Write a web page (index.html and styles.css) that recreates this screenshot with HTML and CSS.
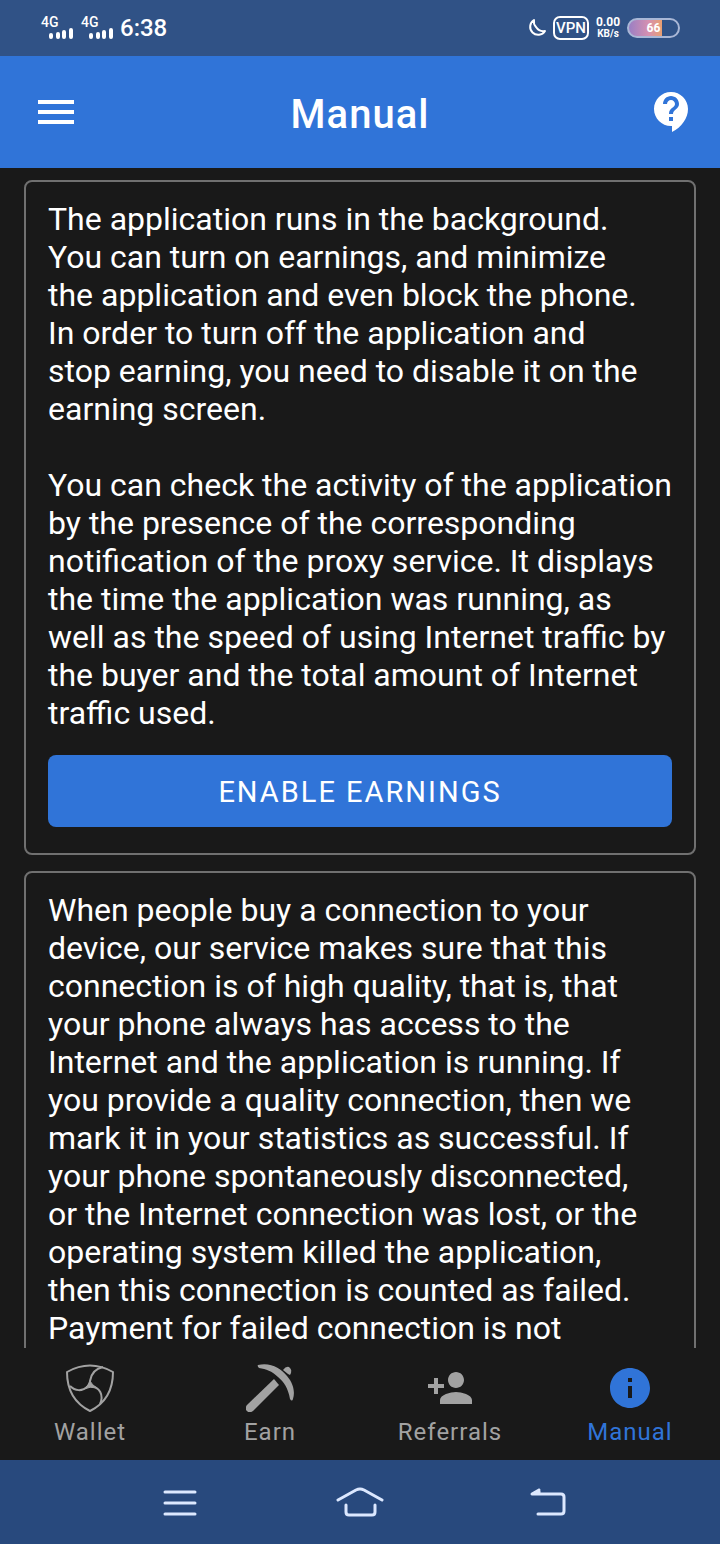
FILE: index.html
```html
<!DOCTYPE html>
<html lang="en">
	<head>
		<meta charset="utf-8">
		<meta name="viewport" content="width=device-width, initial-scale=1">
		<title>Manual</title>
		<link rel="stylesheet" href="styles.css">
	</head>
	<body>
		<div class="status-bar">
			<div class="status-left">
				<div class="signal">
					<span>4G</span>
					<svg width="26" height="12" viewBox="0 0 26 12"><path d="M3 8v2M10 7v3M16 5v5M23 3v7"/></svg>
				</div>
				<div class="signal">
					<span>4G</span>
					<svg width="26" height="12" viewBox="0 0 26 12"><path d="M3 8v2M10 7v3M16 5v5M23 3v7"/></svg>
				</div>
				<span class="clock">6:38</span>
			</div>
			<div class="status-right">
				<svg class="moon" width="20" height="20" viewBox="0 0 20 20"><path d="M7 2A8 8 0 1 0 18 13A9 9 0 0 1 9 9A8 8 0 0 1 7 2z"/></svg>
				<span class="vpn">VPN</span>
				<div class="speed"><b>0.00</b><small>KB/s</small></div>
				<div class="battery"><span>66</span></div>
			</div>
		</div>

		<header class="app-bar">
			<button class="menu" aria-label="Menu">
				<svg width="48" height="48" viewBox="0 0 24 24" fill="#fff"><path d="M3 18h18v-2H3v2zm0-5h18v-2H3v2zm0-7v2h18V6H3z"/></svg>
			</button>
			<h1>Manual</h1>
			<button class="help" aria-label="Help">
				<svg width="48" height="48" viewBox="0 0 24 24" fill="#fff"><path d="M11.500 2C6.810 2 3 5.810 3 10.500S6.810 19 11.500 19h.5v3c4.860-2.340 8-7 8-11.500C20 5.810 16.190 2 11.500 2zm1 14.500h-2v-2h2v2zm0-3.500h-2c0-3.250 3-3 3-5 0-1.100-.9-2-2-2s-2 .9-2 2h-2c0-2.210 1.790-4 4-4s4 1.790 4 4c0 2.500-3 2.750-3 5z"/></svg>
			</button>
		</header>

		<main>
			<section class="card">
				<p>
					The application runs in the background.<br>
					You can turn on earnings, and minimize<br>
					the application and even block the phone.<br>
					In order to turn off the application and<br>
					stop earning, you need to disable it on the<br>
					earning screen.
				</p>
				<p>
					You can check the activity of the application<br>
					by the presence of the corresponding<br>
					notification of the proxy service. It displays<br>
					the time the application was running, as<br>
					well as the speed of using Internet traffic by<br>
					the buyer and the total amount of Internet<br>
					traffic used.
				</p>
				<button class="enable">ENABLE EARNINGS</button>
			</section>
			<section class="card">
				<p>
					When people buy a connection to your<br>
					device, our service makes sure that this<br>
					connection is of high quality, that is, that<br>
					your phone always has access to the<br>
					Internet and the application is running. If<br>
					you provide a quality connection, then we<br>
					mark it in your statistics as successful. If<br>
					your phone spontaneously disconnected,<br>
					or the Internet connection was lost, or the<br>
					operating system killed the application,<br>
					then this connection is counted as failed.<br>
					Payment for failed connection is not
				</p>
			</section>
		</main>

		<nav class="tabs">
			<a href="#wallet">
				<svg width="48" height="48" viewBox="0 0 48 48" fill="none" stroke="#a2a2a2" stroke-width="2" stroke-linejoin="round">
					<path d="M1 8Q24-5 47 8C47 27 38 40 24 47C10 40 1 27 1 8z"/>
					<path d="M37 3C28 5 25 10 24 17Q24 20 22 22C16 28 9 27 4 22M24 22C34 23 38 31 34 40"/>
					<path d="M24 17Q23 21 18 25Q24 22 31 24Q26 21 24 17z" fill="#a2a2a2" stroke-width="1"/>
				</svg>
				<span>Wallet</span>
			</a>
			<a href="#earn">
				<svg width="48" height="48" viewBox="0 0 48 48" fill="#a2a2a2">
					<path d="M12 1C24-2 35 4 41 12C48 20 49 29 47 35Q46 38 44 35C42 24 38 18 32 13C26 7 20 5 13 4Q11 2 12 1z"/>
					<path d="M37 6Q40 2 43 3Q47 6 44 11L42 10z"/>
					<path d="M28 15L33 21L7 47Q3 50 0 46Q-1 43 1 41z"/>
				</svg>
				<span>Earn</span>
			</a>
			<a href="#referrals">
				<svg width="48" height="48" viewBox="0 0 24 24" fill="#a2a2a2"><path d="M15 12c2.210 0 4-1.790 4-4s-1.790-4-4-4-4 1.790-4 4 1.790 4 4 4zm-9-2V7H4v3H1v2h3v3h2v-3h3v-2H6zm9 4c-2.670 0-8 1.340-8 4v2h16v-2c0-2.660-5.330-4-8-4z"/></svg>
				<span>Referrals</span>
			</a>
			<a href="#manual" class="active">
				<svg width="48" height="48" viewBox="0 0 24 24" fill="#3074d8"><path d="M12 2C6.480 2 2 6.480 2 12s4.480 10 10 10 10-4.480 10-10S17.520 2 12 2zm1 15h-2v-6h2v6zm0-8h-2V7h2v2z"/></svg>
				<span>Manual</span>
			</a>
		</nav>

		<div class="system-nav">
			<button aria-label="Recent apps">
				<svg width="48" height="36" viewBox="0 0 48 36"><path d="M13 7h30M13 18h30M13 29h30"/></svg>
			</button>
			<button aria-label="Home">
				<svg width="48" height="36" viewBox="0 0 48 36"><path d="M2 15L20 5Q24 3 28 5L46 15M10 20v7Q10 30 13 30h23Q39 30 39 27v-7"/></svg>
			</button>
			<button aria-label="Back">
				<svg width="48" height="36" viewBox="0 0 48 36"><path d="M19 5L12 9H41Q44 9 44 12V26Q44 29 41 29H18M19 5v4"/></svg>
			</button>
		</div>
	</body>
</html>
```
FILE: styles.css
```css
* {
	box-sizing: border-box;
}
body {
	margin: 0;
	height: 100vh;
	display: flex;
	flex-direction: column;
	background-color: #191919;
	color: #fff;
	font-family: Roboto, sans-serif;
}
button {
	border: 0;
	padding: 0;
	background: none;
	color: inherit;
	font-family: inherit;
}
svg {
	display: block;
	flex: none;
}

.status-bar {
	flex: none;
	height: 56px;
	padding: 0 40px;
	display: flex;
	align-items: center;
	justify-content: space-between;
	background-color: #305286;
}
.status-left, .status-right {
	display: flex;
	align-items: center;
	gap: 6px;
}
.signal {
	width: 34px;
	height: 22px;
	display: flex;
	flex-direction: column;
}
.signal span {
	font-size: 14px;
	line-height: 10px;
	font-weight: 500;
	padding-left: 1px;
}
.signal svg {
	align-self: flex-end;
	stroke: #fff;
	stroke-width: 4;
	stroke-linecap: round;
}
.clock {
	font-size: 24px;
	font-weight: 500;
}
.moon {
	fill: none;
	stroke: #fff;
	stroke-width: 2;
	stroke-linejoin: round;
}
.vpn {
	width: 36px;
	height: 24px;
	border: 2px solid #fff;
	border-radius: 7px;
	font-size: 15px;
	line-height: 20px;
	font-weight: 500;
	text-align: center;
}
.speed {
	width: 26px;
	display: flex;
	flex-direction: column;
	align-items: center;
}
.speed b {
	font-size: 12px;
	line-height: 11px;
}
.speed small {
	font-size: 10px;
	line-height: 11px;
	font-weight: 700;
}
.battery {
	width: 53px;
	height: 20px;
	border: 2px solid #a9b7d6;
	border-radius: 10px;
	background: linear-gradient(90deg, #9a7fc4, #d690b0 40%, #e8a070 68%, transparent 68%);
	font-size: 12px;
	line-height: 16px;
	font-weight: 700;
	text-align: center;
}

.app-bar {
	flex: none;
	height: 112px;
	padding: 0 24px;
	display: grid;
	grid-template-columns: 1fr auto 1fr;
	align-items: center;
	background-color: #3074d8;
}
.app-bar h1 {
	margin: 0;
	padding-top: 4px;
	font-size: 40px;
	font-weight: 500;
	letter-spacing: 1px;
}
.menu {
	justify-self: start;
	margin-left: 8px;
}
.help {
	justify-self: end;
}

main {
	flex: 1;
	min-height: 0;
	overflow: hidden;
	padding: 12px 24px 0;
	display: flex;
	flex-direction: column;
	gap: 16px;
}
.card {
	flex: none;
	border: 2px solid #707070;
	border-radius: 8px;
	padding: 18px 22px 26px;
}
.card p {
	margin: 0;
	font-size: 32px;
	line-height: 38px;
	white-space: nowrap;
}
.card p + p {
	margin-top: 38px;
}
.enable {
	display: block;
	width: 100%;
	height: 72px;
	margin-top: 23px;
	padding-top: 2px;
	border-radius: 8px;
	background-color: #3074d8;
	font-size: 29px;
	letter-spacing: 2px;
}

.tabs {
	flex: none;
	height: 112px;
	display: grid;
	grid-template-columns: repeat(4, 1fr);
}
.tabs a {
	padding-top: 16px;
	display: flex;
	flex-direction: column;
	align-items: center;
	gap: 4px;
	color: #a2a2a2;
	font-size: 24px;
	line-height: 32px;
	letter-spacing: 1px;
	text-decoration: none;
}
.tabs .active {
	color: #3074d8;
}

.system-nav {
	flex: none;
	height: 84px;
	padding: 2px 84px 0;
	display: grid;
	grid-template-columns: repeat(3, 1fr);
	align-items: center;
	justify-items: center;
	background-color: #28497d;
}
.system-nav svg {
	fill: none;
	stroke: #dce8ff;
	stroke-width: 3;
	stroke-linecap: round;
	stroke-linejoin: round;
}
```
